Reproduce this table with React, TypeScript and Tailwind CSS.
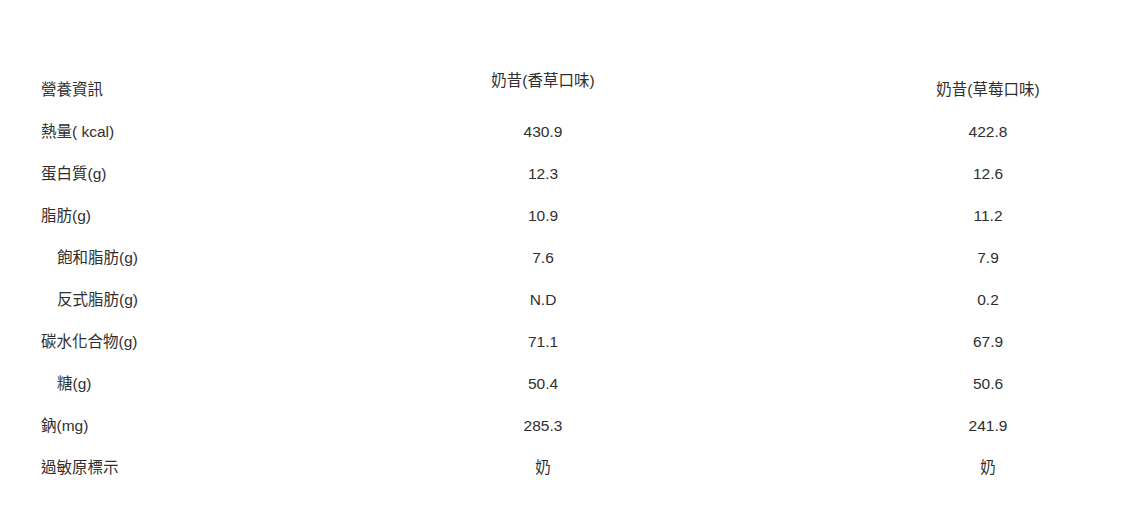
const rows: { label: string; indent?: boolean; a: string; b: string }[] = [
  { label: "熱量( kcal)", a: "430.9", b: "422.8" },
  { label: "蛋白質(g)", a: "12.3", b: "12.6" },
  { label: "脂肪(g)", a: "10.9", b: "11.2" },
  { label: "飽和脂肪(g)", indent: true, a: "7.6", b: "7.9" },
  { label: "反式脂肪(g)", indent: true, a: "N.D", b: "0.2" },
  { label: "碳水化合物(g)", a: "71.1", b: "67.9" },
  { label: "糖(g)", indent: true, a: "50.4", b: "50.6" },
  { label: "鈉(mg)", a: "285.3", b: "241.9" },
  { label: "過敏原標示", a: "奶", b: "奶" },
];

export default function App() {
  return (
    <div
      className="min-h-[516px] w-[1124px] bg-white pt-[69px] pl-[41px] text-[15.5px] text-[#2f2f2f]"
      style={{ fontFamily: '"Liberation Sans", "Noto Sans CJK TC", sans-serif' }}
    >
      <div className="grid grid-cols-[152px_700px_190px]">
        <div className="flex h-[42px] items-center">營養資訊</div>
        <div className="h-[42px] text-center leading-6">奶昔(香草口味)</div>
        <div className="flex h-[42px] items-center justify-center">奶昔(草莓口味)</div>
        {rows.map((r) => (
          <div key={r.label} className="contents">
            <div className={`flex h-[42px] items-center whitespace-nowrap ${r.indent ? "pl-4" : ""}`}>
              {r.label}
            </div>
            <div className="flex h-[42px] items-center justify-center">{r.a}</div>
            <div className="flex h-[42px] items-center justify-center">{r.b}</div>
          </div>
        ))}
      </div>
    </div>
  );
}
